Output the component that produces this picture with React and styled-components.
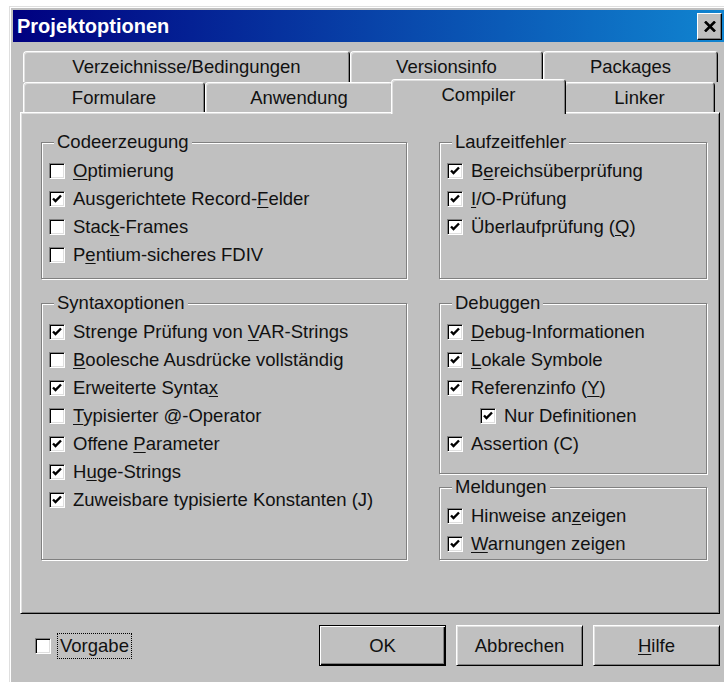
import React from 'react';
import styled, { createGlobalStyle } from 'styled-components';

const GlobalStyle = createGlobalStyle`
  html, body {
    margin: 0;
    background: #fff;
    overflow: hidden;
  }
  body {
    font-family: 'Liberation Sans', Arial, sans-serif;
    font-size: 18.5px;
    color: #111;
  }
`;

const Window = styled.div`
  margin: 6px 0 0 9px;
  width: 719px;
  height: 700px;
  box-sizing: border-box;
  background: #c0c0c0;
  border: 1px solid;
  border-color: #dfdfdf #000 #000 #dfdfdf;
  box-shadow: inset 1px 1px 0 #fff, inset -1px -1px 0 #808080;
  padding: 3px;
`;

const TitleBar = styled.div`
  height: 32px;
  display: flex;
  align-items: center;
  justify-content: space-between;
  padding: 0 2px 0 4px;
  background: linear-gradient(to right, #000080, #1084d0);
`;

const Title = styled.span`
  color: #fff;
  font-weight: bold;
  font-size: 20px;
`;

const CloseButton = styled.div`
  width: 25px;
  height: 27px;
  box-sizing: border-box;
  background: #c0c0c0;
  border: 1px solid;
  border-color: #fff #000 #000 #fff;
  box-shadow: inset -1px -1px 0 #808080;
  display: flex;
  align-items: center;
  justify-content: center;
`;

const Body = styled.div`
  padding: 9px 0 0 7px;
`;

const TabStrip = styled.div`
  padding: 0 3px;
`;

const TabRow = styled.div`
  display: flex;
  height: ${p => p.$h}px;
`;

const Tab = styled.div`
  width: ${p => p.$w}px;
  height: 100%;
  box-sizing: border-box;
  flex: none;
  display: flex;
  align-items: center;
  justify-content: center;
  background: #c0c0c0;
  border-top: 1px solid #fff;
  border-left: 1px solid #fff;
  border-right: 1px solid #000;
  border-radius: 4px 4px 0 0;
  box-shadow: inset 1px 1px 0 #dfdfdf, inset -1px 0 0 #808080;

  ${p => p.$active && `
    position: relative;
    z-index: 1;
    height: calc(100% + 5px);
    margin: -3px -2px -2px;
    padding-bottom: 5px;
  `}
`;

const Panel = styled.div`
  width: 700px;
  height: 502px;
  box-sizing: border-box;
  border: 1px solid;
  border-color: #fff #000 #000 #fff;
  box-shadow: inset 1px 1px 0 #dfdfdf, inset -1px -1px 0 #808080;
  padding: 29px 0 0 20px;
  display: grid;
  grid-template-columns: 366px 268px;
  grid-template-rows: 137px 257px;
  column-gap: 32px;
  row-gap: 24px;
`;

const Stack = styled.div`
  display: flex;
  flex-direction: column;
  gap: 13px;
`;

const Group = styled.div`
  position: relative;
  box-sizing: border-box;
  height: ${p => (p.$h ? `${p.$h}px` : '100%')};
  border: 1px solid #808080;
  box-shadow: inset 1px 1px 0 #fff, 1px 1px 0 #fff;
  padding: 14px 0 0 7px;
`;

const Caption = styled.span`
  position: absolute;
  top: -11px;
  left: 12px;
  padding: 0 3px;
  line-height: 20px;
  background: #c0c0c0;
`;

const Row = styled.div`
  height: 28px;
  display: flex;
  align-items: center;
  gap: 8px;
  padding-left: ${p => (p.$indent ? 33 : 0)}px;
  white-space: nowrap;
`;

const Box = styled.span`
  width: 16px;
  height: 16px;
  box-sizing: border-box;
  flex: none;
  background: #fff;
  border: 1px solid;
  border-color: #808080 #fff #fff #808080;
  box-shadow: inset 1px 1px 0 #000, inset -1px -1px 0 #dfdfdf;
  display: flex;
  align-items: center;
  justify-content: center;
`;

const Key = styled.span`
  text-decoration: underline;
  text-underline-offset: 2px;
`;

const Footer = styled.div`
  width: 700px;
  display: flex;
  align-items: center;
  padding: 11px 0 0 15px;
  box-sizing: border-box;
`;

const FocusLabel = styled.span`
  margin-left: 6px;
  padding: 0 2px;
  line-height: 24px;
  border: 1px dotted #000;
`;

const Buttons = styled.div`
  margin-left: auto;
  display: flex;
  gap: 10px;
`;

const Button = styled.button`
  width: 127px;
  height: 41px;
  box-sizing: border-box;
  font: inherit;
  color: #111;
  background: #c0c0c0;
  border: 1px solid;
  border-color: ${p => (p.$default ? '#000' : '#fff #000 #000 #fff')};
  box-shadow: ${p =>
    p.$default
      ? 'inset 1px 1px 0 #fff, inset -1px -1px 0 #000, inset -2px -2px 0 #808080'
      : 'inset 1px 1px 0 #dfdfdf, inset -1px -1px 0 #808080'};
  padding: 0;
`;

function Check({ on }) {
  return (
    <Box>
      {on && (
        <svg width="12" height="12" viewBox="0 0 12 12">
          <polyline points="2,5.5 4.5,8 10,2.5" fill="none" stroke="#000" strokeWidth="2.4" />
        </svg>
      )}
    </Box>
  );
}

function Option({ on, indent, children }) {
  return (
    <Row $indent={indent}>
      <Check on={on} />
      <span>{children}</span>
    </Row>
  );
}

const codegen = [
  [false, <><Key>O</Key>ptimierung</>],
  [true, <>Ausgerichtete Record-<Key>F</Key>elder</>],
  [false, <>Stac<Key>k</Key>-Frames</>],
  [false, <>P<Key>e</Key>ntium-sicheres FDIV</>],
];

const syntax = [
  [true, <>Strenge Prüfung von <Key>V</Key>AR-Strings</>],
  [false, <><Key>B</Key>oolesche Ausdrücke vollständig</>],
  [true, <>Erweiterte Synta<Key>x</Key></>],
  [false, <><Key>T</Key>ypisierter @-Operator</>],
  [true, <>Offene <Key>P</Key>arameter</>],
  [true, <>H<Key>u</Key>ge-Strings</>],
  [true, <>Zuweisbare typisierte Konstanten (J)</>],
];

const runtime = [
  [true, <>B<Key>e</Key>reichsüberprüfung</>],
  [true, <><Key>I</Key>/O-Prüfung</>],
  [true, <>Überlaufprüfung (<Key>Q</Key>)</>],
];

const debug = [
  [true, <><Key>D</Key>ebug-Informationen</>],
  [true, <><Key>L</Key>okale Symbole</>],
  [true, <>Referenzinfo (<Key>Y</Key>)</>],
  [true, <>Nur Definitionen</>, true],
  [true, <>Assertion (C)</>],
];

const messages = [
  [true, <>Hinweise an<Key>z</Key>eigen</>],
  [true, <><Key>W</Key>arnungen zeigen</>],
];

function OptionGroup({ title, items, h }) {
  return (
    <Group $h={h}>
      <Caption>{title}</Caption>
      {items.map(([on, label, indent], i) => (
        <Option key={i} on={on} indent={indent}>{label}</Option>
      ))}
    </Group>
  );
}

const backTabs = [
  ['Verzeichnisse/Bedingungen', 327],
  ['Versionsinfo', 193],
  ['Packages', 175],
];

const frontTabs = [
  ['Formulare', 182],
  ['Anwendung', 188],
  ['Compiler', 175, true],
  ['Linker', 151],
];

export default function App() {
  return (
    <>
      <GlobalStyle />
      <Window>
        <TitleBar>
          <Title>Projektoptionen</Title>
          <CloseButton>
            <svg width="12" height="11" viewBox="0 0 12 11">
              <path d="M1 0.5 L11 10.5 M11 0.5 L1 10.5" stroke="#000" strokeWidth="2.6" />
            </svg>
          </CloseButton>
        </TitleBar>
        <Body>
          <TabStrip>
            <TabRow $h={31}>
              {backTabs.map(([label, w]) => (
                <Tab key={label} $w={w}>{label}</Tab>
              ))}
            </TabRow>
            <TabRow $h={30}>
              {frontTabs.map(([label, w, active]) => (
                <Tab key={label} $w={w} $active={active}>{label}</Tab>
              ))}
            </TabRow>
          </TabStrip>
          <Panel>
            <OptionGroup title="Codeerzeugung" items={codegen} />
            <OptionGroup title="Laufzeitfehler" items={runtime} />
            <OptionGroup title="Syntaxoptionen" items={syntax} />
            <Stack>
              <OptionGroup title="Debuggen" items={debug} h={171} />
              <OptionGroup title="Meldungen" items={messages} h={73} />
            </Stack>
          </Panel>
          <Footer>
            <Check on={false} />
            <FocusLabel>Vorgabe</FocusLabel>
            <Buttons>
              <Button $default>OK</Button>
              <Button>Abbrechen</Button>
              <Button><Key>H</Key>ilfe</Button>
            </Buttons>
          </Footer>
        </Body>
      </Window>
    </>
  );
}
